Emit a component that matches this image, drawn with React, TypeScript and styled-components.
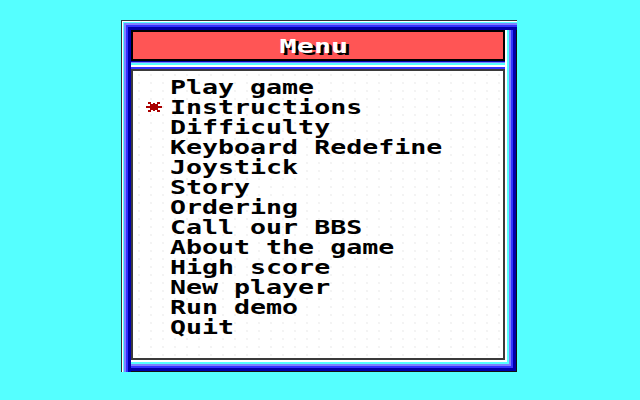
import React from "react";
import styled, { createGlobalStyle } from "styled-components";

const GlobalStyle = createGlobalStyle`
  html, body {
    margin: 0;
    padding: 0;
    background: #55ffff;
  }
  body {
    width: 640px;
    height: 400px;
    overflow: hidden;
    font-family: "DejaVu Sans Mono", "Liberation Mono", monospace;
  }
`;

const Screen = styled.div`
  width: 640px;
  height: 400px;
  padding: 20px 0 0 121px;
  box-sizing: border-box;
`;

const Frame = styled.div`
  width: 396px;
  height: 352px;
  box-sizing: border-box;
  padding: 10px 12px 12px 10px;
  display: flex;
  flex-direction: column;
  background: #ffffff;
  box-shadow:
    inset 1px 1px 0 #333333,
    inset 2px 2px 0 #ffffff,
    inset 3px 3px 0 #55ffff,
    inset 5px 5px 0 #8080ff,
    inset 7px 7px 0 #3333ff,
    inset 10px 10px 0 #0000aa,
    inset -1px -1px 0 #111111,
    inset -4px -4px 0 #0000aa,
    inset -6px -6px 0 #3333ff,
    inset -8px -8px 0 #8080ff,
    inset -10px -10px 0 #55ffff,
    inset -12px -12px 0 #ffffff;
`;

const TitleBar = styled.div`
  height: 31px;
  box-sizing: border-box;
  border: 2px solid #000000;
  background: #ff5555;
  display: flex;
  align-items: center;
  justify-content: center;
`;

const TitleText = styled.span`
  display: inline-block;
  color: #ffffff;
  font-family: "DejaVu Sans Mono", monospace;
  font-weight: bold;
  font-size: 19px;
  line-height: 20px;
  text-shadow: 2px 2px 0 #000000;
  transform: translateX(-4px) scaleX(1.5);
`;

const Separator = styled.div`
  height: 8px;
  background: linear-gradient(
    to bottom,
    #0000aa 0px,
    #0000aa 1px,
    #8080ff 1px,
    #8080ff 2px,
    #55ffff 2px,
    #55ffff 4px,
    #ffffff 4px,
    #ffffff 6px,
    #3333ff 6px,
    #3333ff 8px
  );
`;

const Content = styled.div`
  flex: 1;
  box-sizing: border-box;
  border: 2px solid #3a3a3a;
  background-color: #ffffff;
  background-image: radial-gradient(circle, #ededed 0.6px, transparent 0.9px);
  background-size: 12px 8px;
  padding: 6px 0 0 13px;
`;

const MenuList = styled.ul`
  list-style: none;
  margin: 0;
  padding: 0;
`;

const MenuItem = styled.li`
  display: grid;
  grid-template-columns: 24px auto;
  align-items: center;
  height: 20px;
`;

const Marker = styled.span`
  display: flex;
  align-items: center;
  width: 16px;
  height: 20px;
`;

const Label = styled.span`
  display: inline-block;
  color: #000000;
  font-family: "DejaVu Sans Mono", monospace;
  font-weight: bold;
  font-size: 19px;
  line-height: 20px;
  white-space: pre;
  transform: scaleX(1.4);
  transform-origin: left center;
`;

const Star = () => (
  <svg width="16" height="12" viewBox="0 0 16 12" shapeRendering="crispEdges">
    <g fill="#aa0000">
      <rect x="0" y="5" width="16" height="2" />
      <rect x="7" y="2" width="2" height="8" />
      <rect x="2" y="1" width="3" height="2" />
      <rect x="4" y="3" width="3" height="2" />
      <rect x="11" y="1" width="3" height="2" />
      <rect x="9" y="3" width="3" height="2" />
      <rect x="2" y="9" width="3" height="2" />
      <rect x="4" y="7" width="3" height="2" />
      <rect x="11" y="9" width="3" height="2" />
      <rect x="9" y="7" width="3" height="2" />
    </g>
  </svg>
);

const items = [
  "Play game",
  "Instructions",
  "Difficulty",
  "Keyboard Redefine",
  "Joystick",
  "Story",
  "Ordering",
  "Call our BBS",
  "About the game",
  "High score",
  "New player",
  "Run demo",
  "Quit",
];

const selected = 1;

export default function App() {
  return (
    <>
      <GlobalStyle />
      <Screen>
        <Frame>
          <TitleBar>
            <TitleText>Menu</TitleText>
          </TitleBar>
          <Separator />
          <Content>
            <MenuList>
              {items.map((label, i) => (
                <MenuItem key={label}>
                  <Marker>{i === selected ? <Star /> : null}</Marker>
                  <Label>{label}</Label>
                </MenuItem>
              ))}
            </MenuList>
          </Content>
        </Frame>
      </Screen>
    </>
  );
}
